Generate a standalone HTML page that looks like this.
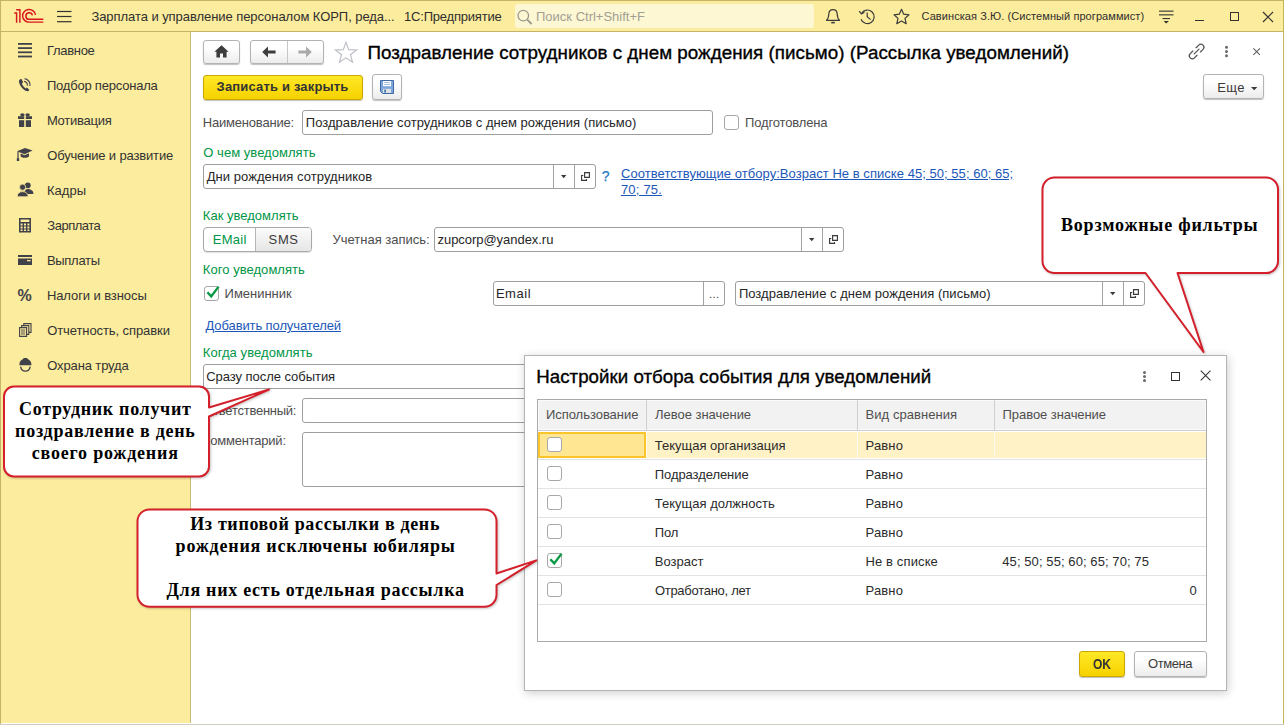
<!DOCTYPE html>
<html lang="ru">
<head>
<meta charset="utf-8">
<title>Рассылка уведомлений</title>
<style>
*{box-sizing:border-box}
html,body{margin:0;padding:0}
body{width:1284px;height:725px;position:relative;overflow:hidden;background:#fff;font-family:"Liberation Sans",sans-serif;font-size:13px;color:#333}
.abs{position:absolute}
.t{position:absolute;white-space:nowrap;line-height:16px;font-size:13px}
.g{color:#009646}
.lbl{color:#4d4d4d}
.blk{color:#262626}
.lnk{color:#1c57b9;text-decoration:underline}
.inp{position:absolute;border:1px solid #9e9e9e;border-radius:3px;background:#fff;height:25px}
.inp .v{position:absolute;left:4px;top:4px;line-height:16px;white-space:nowrap;color:#1a1a1a}
.dv{position:absolute;top:0;bottom:0;width:1px;background:#a2a2a2}
.ar{right:28.4px;top:10px}
.op{right:4.8px;top:7.2px}
.btn{position:absolute;border:1px solid #b3b3b3;border-radius:3px;background:linear-gradient(#ffffff 30%,#ececec);box-shadow:0 1px 1px rgba(0,0,0,.25)}
.ybtn{position:absolute;border:1px solid #c9a700;border-radius:3px;background:linear-gradient(#ffe826,#f6d200);box-shadow:0 1px 1px rgba(0,0,0,.25);font-weight:bold;color:#333;text-align:center}
.cb{position:absolute;width:15px;height:15px;border:1px solid #a8a8a8;border-radius:3px;background:#fff}
svg{position:absolute;overflow:visible}
.sf{font-family:"Liberation Serif",serif;font-weight:bold;color:#000;font-size:18px;line-height:22px}
</style>
</head>
<body>

<!-- ===== title bar ===== -->
<div class="abs" id="topbar" style="left:0;top:0;width:1284px;height:32px;background:#fcec9d;border-top:1px solid #c4b468;border-bottom:1px solid #c4b468"></div>
<!-- logo 1C -->
<svg style="left:0;top:0" width="60" height="32" viewBox="0 0 60 32" fill="none" stroke="#d9151d" stroke-width="1.45">
  <path d="M14.2 12.9 L16.6 12.9 L16.6 22.8"/>
  <path d="M16.2 9.8 L19.9 9.8 L19.9 22.8"/>
  <path d="M35.54 14.92 A6.5 6.3 0 1 0 29.1 22.1 L43.3 22.1"/>
  <path d="M32.4 15.3 A3.3 3.3 0 1 0 29.3 19.3 L43.3 19.3"/>
</svg>
<!-- hamburger -->
<svg style="left:57px;top:9px" width="15" height="14" viewBox="0 0 15 14" fill="#333">
  <rect x="0" y="1.9" width="14.5" height="1.2"/><rect x="0" y="6.9" width="14.5" height="1.2"/><rect x="0" y="12.1" width="14.5" height="1.2"/>
</svg>
<div class="t" style="left:91.4px;top:9px;color:#2f2f2f;letter-spacing:-0.06px">Зарплата и управление персоналом КОРП, реда...</div>
<div class="t" style="left:404px;top:9px;color:#2f2f2f;letter-spacing:-0.2px">1С:Предприятие</div>
<!-- search -->
<div class="abs" style="left:515px;top:4px;width:299px;height:24px;background:#fef7d3;border-radius:3px"></div>
<svg style="left:517px;top:9px" width="16" height="16" viewBox="0 0 16 16" fill="none" stroke="#9c9a8c" stroke-width="1.3">
  <circle cx="6.3" cy="6.6" r="5.3"/><path d="M10.2 10.6 L14.6 15" stroke-width="1.8"/>
</svg>
<div class="t" style="left:536px;top:9px;color:#a19f93">Поиск Ctrl+Shift+F</div>
<!-- bell -->
<svg style="left:825px;top:8px" width="16" height="17" viewBox="0 0 16 17" fill="none" stroke="#3c3c3c" stroke-width="1.2">
  <path d="M1.5 12.3 C3.6 10.6 3.7 8.6 3.8 6 C3.9 3.3 5.6 1.6 8 1.6 C10.4 1.6 12.1 3.3 12.2 6 C12.3 8.6 12.4 10.6 14.5 12.3 Z" stroke-linejoin="round"/>
  <path d="M6.2 14.6 L9.8 14.6" stroke-width="1.6"/>
</svg>
<!-- history -->
<svg style="left:858px;top:8px" width="18" height="17" viewBox="0 0 18 17" fill="none" stroke="#3c3c3c" stroke-width="1.2">
  <path d="M3.6 5.2 A6.8 6.8 0 1 1 3.0 11.2"/>
  <path d="M1.2 3.2 L3.4 5.9 L6.4 4.2" stroke-linejoin="round"/>
  <path d="M9.2 4.4 L9.2 8.8 L12.6 11.6"/>
</svg>
<!-- star -->
<svg style="left:893px;top:8px" width="17" height="17" viewBox="0 0 17 17" fill="none" stroke="#3c3c3c" stroke-width="1.2" stroke-linejoin="round">
  <path d="M8.5 1.3 L10.7 6.2 L16 6.8 L12 10.4 L13.2 15.7 L8.5 13 L3.8 15.7 L5 10.4 L1 6.8 L6.3 6.2 Z"/>
</svg>
<div class="t" style="left:921.5px;top:8px;font-size:11px;color:#2f2f2f;letter-spacing:0.077px">Савинская З.Ю. (Системный программист)</div>
<!-- settings lines -->
<svg style="left:1159px;top:10px" width="15" height="14" viewBox="0 0 15 14" fill="#333">
  <rect x="0" y="0.6" width="14.5" height="1.1"/><rect x="0" y="4.3" width="14.5" height="1.1"/><rect x="3.5" y="8" width="7.5" height="1.1"/>
  <path d="M4.6 11 L9.9 11 L7.25 13.6 Z"/>
</svg>
<!-- window buttons -->
<div class="abs" style="left:1195px;top:20px;width:9px;height:1.3px;background:#333"></div>
<div class="abs" style="left:1229.5px;top:11.5px;width:9.5px;height:9.5px;border:1.2px solid #333"></div>
<svg style="left:1262px;top:11px" width="12" height="12" viewBox="0 0 12 12" stroke="#333" stroke-width="1.2"><path d="M1 1 L11 11 M11 1 L1 11"/></svg>

<!-- ===== sidebar ===== -->
<div class="abs" id="side" style="left:0;top:32px;width:191px;height:691px;background:#fcec9d;border-right:1px solid #c9ba72"></div>
<div id="menu" style="color:#333">
<div class="t" style="left:46.9px;top:43px;letter-spacing:-0.292px">Главное</div>
<div class="t" style="left:46.9px;top:78px;letter-spacing:-0.203px">Подбор персонала</div>
<div class="t" style="left:46.9px;top:113px;letter-spacing:-0.244px">Мотивация</div>
<div class="t" style="left:47.2px;top:148px;letter-spacing:-0.153px">Обучение и развитие</div>
<div class="t" style="left:46.9px;top:183px;letter-spacing:0.075px">Кадры</div>
<div class="t" style="left:47.3px;top:218px;letter-spacing:-0.486px">Зарплата</div>
<div class="t" style="left:46.9px;top:253px;letter-spacing:-0.275px">Выплаты</div>
<div class="t" style="left:46.9px;top:288px;letter-spacing:-0.086px">Налоги и взносы</div>
<div class="t" style="left:47.2px;top:323px;letter-spacing:-0.089px">Отчетность, справки</div>
<div class="t" style="left:47.2px;top:358px;letter-spacing:-0.118px">Охрана труда</div>
</div>
<!-- sidebar icons -->
<svg style="left:18px;top:42.5px" width="14" height="15" viewBox="0 0 14 15" fill="#41414a">
  <rect x="0" y="0" width="14" height="1.8"/><rect x="0" y="4.2" width="14" height="1.8"/><rect x="0" y="8.4" width="14" height="1.8"/><rect x="0" y="12.6" width="14" height="1.8"/>
</svg>
<svg style="left:18px;top:78px" width="14" height="14" viewBox="0 0 14 14" fill="#41414a">
  <path d="M1.2 2.2 C1.8 1.2 2.8 0.9 3.5 1.1 L5.2 4.3 L3.9 5.6 C4.6 7.6 5.8 9.2 7.6 10.4 L9.0 9.5 L11.4 12.0 C10.8 13.0 9.8 13.4 8.6 13.1 C4.6 11.6 1.6 7.6 1.0 4.0 C0.9 3.3 0.9 2.7 1.2 2.2 Z"/>
  <path d="M6.2 3.3 A3.6 3.6 0 0 1 9.3 7.6" fill="none" stroke="#41414a" stroke-width="1.2"/>
  <path d="M6.6 0.7 A6.2 6.2 0 0 1 11.9 8.0" fill="none" stroke="#41414a" stroke-width="1.2"/>
</svg>
<svg style="left:18px;top:113px" width="14" height="14" viewBox="0 0 14 14" fill="#41414a">
  <rect x="0" y="3.2" width="6.2" height="2.8"/><rect x="7.8" y="3.2" width="6.2" height="2.8"/>
  <rect x="1" y="7.2" width="5.2" height="6.8"/><rect x="7.8" y="7.2" width="5.2" height="6.8"/>
  <ellipse cx="4.4" cy="1.8" rx="2.2" ry="1.5"/><ellipse cx="9.6" cy="1.8" rx="2.2" ry="1.5"/>
</svg>
<svg style="left:16px;top:147px" width="17" height="15" viewBox="0 0 17 15" fill="#41414a">
  <path d="M1 4.2 L9 1 L16.6 3.6 L8.6 7.2 Z"/>
  <path d="M4.6 6.4 L8.6 8.2 L13 6.2 L13 9.2 C11.5 11.2 6.4 11.2 4.6 9.4 Z"/>
  <rect x="1.4" y="4.6" width="1.2" height="7"/><rect x="0.8" y="11.2" width="2.4" height="2.8"/>
</svg>
<svg style="left:17px;top:182px" width="17" height="15" viewBox="0 0 17 15" fill="#41414a">
  <circle cx="10.8" cy="3.3" r="2.9"/>
  <path d="M7.5 11.2 C7.5 8.2 9 7 10.8 7 C13.5 7 16.4 8.6 16.4 11.4 L16.4 12 L7.5 12 Z"/>
  <circle cx="5.6" cy="5.2" r="3.1" stroke="#fcec9d" stroke-width="0.8"/>
  <path d="M0.2 14.8 C0.2 11.4 2.6 9.6 5.6 9.6 C8.6 9.6 11.2 11.4 11.2 14.8 Z" stroke="#fcec9d" stroke-width="0.8"/>
</svg>
<svg style="left:19px;top:218px" width="12" height="15" viewBox="0 0 12 15" fill="#41414a">
  <path d="M0 0 H12 V14.4 H0 Z M1.6 1.6 V4 H10.4 V1.6 Z M1.6 5.6 V7.4 H3.6 V5.6 Z M5 5.6 V7.4 H7 V5.6 Z M8.4 5.6 V7.4 H10.4 V5.6 Z M1.6 8.6 V10.4 H3.6 V8.6 Z M5 8.6 V10.4 H7 V8.6 Z M8.4 8.6 V10.4 H10.4 V8.6 Z M1.6 11.4 V13 H3.6 V11.4 Z M5 11.4 V13 H7 V11.4 Z M8.4 11.4 V13 H10.4 V11.4 Z" fill-rule="evenodd"/>
</svg>
<svg style="left:18px;top:255px" width="14" height="11" viewBox="0 0 14 11" fill="#41414a">
  <rect x="0" y="0" width="14" height="2"/>
  <path d="M0 3.6 H14 V10 H0 Z M9 5 V6.2 H12.6 V5 Z" fill-rule="evenodd"/>
</svg>
<div class="t" style="left:17.6px;top:287px;font-weight:bold;font-size:16px;color:#41414a;line-height:18px">%</div>
<svg style="left:19px;top:323px" width="13" height="14" viewBox="0 0 13 14" fill="none" stroke="#41414a" stroke-width="1.1">
  <path d="M0.6 4.6 H7.6 V13.4 H0.6 Z"/>
  <path d="M2.6 4.4 V2.6 H9.8 V11.4 H7.8"/>
  <path d="M4.8 2.4 V0.6 H12 V9.4 H10"/>
  <path d="M2 7 H6.2 M2 9 H6.2 M2 11 H6.2" stroke-width="0.9"/>
</svg>
<svg style="left:19px;top:358px" width="13" height="14" viewBox="0 0 13 14" fill="#41414a">
  <path d="M0.4 6.4 C0.4 3.6 2 1.6 4.4 0.9 L4.4 0 L8.4 0 L8.4 0.9 C10.8 1.6 12.4 3.6 12.4 6.4 L12.4 7.2 L0.4 7.2 Z"/>
  <path d="M1.6 8.6 C2 11.4 4 13.2 6.4 13.2 C8.8 13.2 10.8 11.4 11.2 8.6" fill="none" stroke="#41414a" stroke-width="1.3"/>
</svg>
<!-- ===== main form ===== -->
<div id="form">
<!-- nav buttons -->
<div class="btn" style="left:203px;top:40px;width:37px;height:24px"></div>
<svg style="left:214px;top:45px" width="15" height="13" viewBox="0 0 15 13" fill="#3d3d3d">
  <path d="M7.5 0.2 L14.6 6.8 L12.6 6.8 L12.6 12.6 L9.0 12.6 L9.0 8.4 L6.0 8.4 L6.0 12.6 L2.4 12.6 L2.4 6.8 L0.4 6.8 Z"/>
</svg>
<div class="btn" style="left:250px;top:40px;width:74px;height:24px"></div>
<div class="abs" style="left:287px;top:41px;width:1px;height:22px;background:#c6c6c6"></div>
<svg style="left:262px;top:46px" width="14" height="12" viewBox="0 0 14 12" fill="#3d3d3d">
  <path d="M6 0.4 L6 4.6 L13.6 4.6 L13.6 7.4 L6 7.4 L6 11.6 L0.2 6 Z"/>
</svg>
<svg style="left:298px;top:46px" width="14" height="12" viewBox="0 0 14 12" fill="#a9a9a9">
  <path d="M8 0.4 L8 4.6 L0.4 4.6 L0.4 7.4 L8 7.4 L8 11.6 L13.8 6 Z"/>
</svg>
<svg style="left:334.3px;top:41px" width="24" height="23" viewBox="0 0 24 23" fill="#fff" stroke="#b9bcc4" stroke-width="1.1" stroke-linejoin="miter">
  <path d="M12 1.4 L14.7 8.6 L22.6 8.9 L16.4 13.7 L18.6 21.3 L12 16.9 L5.4 21.3 L7.6 13.7 L1.4 8.9 L9.3 8.6 Z"/>
</svg>
<div class="t" id="ttl" style="left:367.5px;top:41px;font-size:18.8px;line-height:24px;color:#000;-webkit-text-stroke:0.35px #000;letter-spacing:0.030px">Поздравление сотрудников с днем рождения (письмо) (Рассылка уведомлений)</div>
<!-- link, dots, close -->
<svg style="left:1188px;top:43px" width="17" height="17" viewBox="0 0 17 17" fill="none" stroke="#555" stroke-width="1.3" stroke-linecap="round">
  <g transform="translate(8.6 8.5) rotate(-45)"><path d="M2.4 -3 h3.6 a3 3 0 0 1 0 6 h-3.6"/><path d="M-2.4 3 h-3.6 a3 3 0 0 1 0 -6 h3.6"/><path d="M-3.4 0 H3.4"/></g>
</svg>
<svg style="left:1224px;top:45px" width="5" height="13" viewBox="0 0 5 13" fill="#6a6a6a">
  <circle cx="2.5" cy="2.2" r="1.5"/><circle cx="2.5" cy="6.5" r="1.5"/><circle cx="2.5" cy="10.8" r="1.5"/>
</svg>
<svg style="left:1253px;top:48px" width="7.3" height="7.3" viewBox="0 0 8 8" stroke="#5c5c5c" stroke-width="1.1"><path d="M0.4 0.4 L7.6 7.6 M7.6 0.4 L0.4 7.6"/></svg>
<!-- command bar -->
<div class="ybtn" style="left:203px;top:75px;width:160px;height:25px"></div>
<div class="t" style="left:216.6px;top:79px;font-weight:bold;color:#333;letter-spacing:0.171px">Записать и закрыть</div>
<div class="btn" style="left:372px;top:74px;width:30px;height:26px"></div>
<svg style="left:380px;top:80px" width="14" height="14" viewBox="0 0 14 14">
  <path d="M0.5 0.5 H13.5 V13.5 H2.6 L0.5 11.4 Z" fill="#7ea7dd" stroke="#3f69a6"/>
  <rect x="3" y="1" width="8" height="5.2" fill="#fff"/>
  <rect x="4.2" y="2.2" width="5.6" height="0.8" fill="#8eb0de"/><rect x="4.2" y="4" width="5.6" height="0.8" fill="#8eb0de"/>
  <rect x="3" y="8.8" width="8" height="4.2" fill="#dde2e2"/>
  <rect x="4.2" y="9.6" width="1.8" height="3" fill="#4b78b8"/>
</svg>
<div class="btn" style="left:1203px;top:74px;width:61px;height:25px"></div>
<div class="t" style="left:1217.2px;top:80px;color:#3a3a3a;letter-spacing:0.45px">Еще</div>
<svg style="left:1250.6px;top:87px" width="6.4" height="3.6" viewBox="0 0 7 4" fill="#3a3a3a"><path d="M0 0 L7 0 L3.5 3.6 Z"/></svg>

<!-- row: name -->
<div class="t lbl" style="left:202.8px;top:115px;letter-spacing:-0.200px">Наименование:</div>
<div class="inp" style="left:302px;top:110px;width:411px"></div>
<div class="t blk" style="left:305.8px;top:115px;letter-spacing:0.031px">Поздравление сотрудников с днем рождения (письмо)</div>
<div class="cb" style="left:724px;top:115px"></div>
<div class="t lbl" style="left:745.0px;top:115px;letter-spacing:-0.145px">Подготовлена</div>

<!-- about -->
<div class="t g" style="left:203.3px;top:145px;letter-spacing:0.037px">О чем уведомлять</div>
<div class="inp" style="left:203px;top:164px;width:393px"><i class="dv" style="right:41px"></i><i class="dv" style="right:20px"></i><svg class="ar" width="5.4" height="3.2" viewBox="0 0 5.4 3.2" fill="#3a3a3a"><path d="M0 0 L5.4 0 L2.7 3.2 Z"/></svg><svg class="op" width="9" height="9" viewBox="0 0 9 9" fill="none" stroke="#3a3a3a" stroke-width="1.15"><path d="M3.6 0.6 H8.4 V5.4 H3.6 Z"/><path d="M2.3 3.5 H0.6 V8.4 H5.5 V6.9"/></svg></div>
<div class="t blk" style="left:206.7px;top:169px;letter-spacing:0.048px">Дни рождения сотрудников</div>
<div class="t" style="left:601.8px;top:168.2px;color:#217bc4;font-size:14px;-webkit-text-stroke:0.25px #217bc4">?</div>
<div class="t lnk" style="left:621.1px;top:166px;letter-spacing:0.042px">Соответствующие отбору:Возраст Не в списке 45; 50; 55; 60; 65;</div>
<div class="t lnk" style="left:620.9px;top:182px;letter-spacing:0.208px">70; 75.</div>

<!-- how -->
<div class="t g" style="left:202.8px;top:208px;letter-spacing:0.019px">Как уведомлять</div>
<div class="abs" style="left:203px;top:227px;width:109px;height:25px;border:1px solid #a9a9a9;border-radius:4px;background:#fff;box-shadow:0 1px 1px rgba(0,0,0,.12)"></div>
<div class="abs" style="left:255px;top:228px;width:56px;height:23px;border-left:1px solid #b5b5b5;border-radius:0 3px 3px 0;background:linear-gradient(#fbfbfb,#e6e6e6)"></div>
<div class="t g" style="left:212.7px;top:232px;letter-spacing:0.300px">EMail</div>
<div class="t" style="left:268.6px;top:232px;color:#3a3a3a;letter-spacing:0.625px">SMS</div>
<div class="t lbl" style="left:332.6px;top:232px;letter-spacing:-0.021px">Учетная запись:</div>
<div class="inp" style="left:434px;top:227px;width:410px"><i class="dv" style="right:41px"></i><i class="dv" style="right:20px"></i><svg class="ar" width="5.4" height="3.2" viewBox="0 0 5.4 3.2" fill="#3a3a3a"><path d="M0 0 L5.4 0 L2.7 3.2 Z"/></svg><svg class="op" width="9" height="9" viewBox="0 0 9 9" fill="none" stroke="#3a3a3a" stroke-width="1.15"><path d="M3.6 0.6 H8.4 V5.4 H3.6 Z"/><path d="M2.3 3.5 H0.6 V8.4 H5.5 V6.9"/></svg></div>
<div class="t blk" style="left:437.5px;top:232px;letter-spacing:-0.041px">zupcorp@yandex.ru</div>

<!-- who -->
<div class="t g" style="left:202.8px;top:262px;letter-spacing:0.046px">Кого уведомлять</div>
<div class="cb" style="left:204px;top:286px"></div>
<svg style="left:206px;top:285px" width="14" height="14" viewBox="0 0 14 14" fill="none" stroke="#0a9a46" stroke-width="2.4"><path d="M1.4 7.2 L5.2 11.4 L12.6 1.6"/></svg>
<div class="t lbl" style="left:224.6px;top:286px;letter-spacing:-0.019px">Именинник</div>
<div class="inp" style="left:493px;top:281px;width:232px"><i class="dv" style="right:20px"></i></div>
<div class="t blk" style="left:495.9px;top:286px;letter-spacing:0.562px">Email</div>
<div class="t blk" style="left:709px;top:286px;font-size:11px;letter-spacing:0.45px;color:#333">...</div>
<div class="inp" style="left:735px;top:281px;width:410px"><i class="dv" style="right:41px"></i><i class="dv" style="right:20px"></i><svg class="ar" width="5.4" height="3.2" viewBox="0 0 5.4 3.2" fill="#3a3a3a"><path d="M0 0 L5.4 0 L2.7 3.2 Z"/></svg><svg class="op" width="9" height="9" viewBox="0 0 9 9" fill="none" stroke="#3a3a3a" stroke-width="1.15"><path d="M3.6 0.6 H8.4 V5.4 H3.6 Z"/><path d="M2.3 3.5 H0.6 V8.4 H5.5 V6.9"/></svg></div>
<div class="t blk" style="left:738.9px;top:286px;letter-spacing:0.022px">Поздравление с днем рождения (письмо)</div>
<div class="t lnk" style="left:205.5px;top:318px;letter-spacing:-0.105px">Добавить получателей</div>

<!-- when -->
<div class="t g" style="left:202.8px;top:345px;letter-spacing:0.067px">Когда уведомлять</div>
<div class="inp" style="left:203px;top:364px;width:393px"></div>
<div class="t blk" style="left:206.2px;top:369px;letter-spacing:-0.044px">Сразу после события</div>
<div class="t lbl" style="left:203.3px;top:403px;letter-spacing:-0.254px">Ответственный:</div>
<div class="inp" style="left:302px;top:398px;width:411px"></div>

<div class="t lbl" style="left:202.8px;top:433px;letter-spacing:-0.209px">Комментарий:</div>
<div class="inp" style="left:302px;top:432px;width:411px;height:55px"></div>

</div>
<!-- ===== callout 1 (drawn under dialog) ===== -->
<svg id="c1" style="left:0;top:0;filter:drop-shadow(1px 1px 1px rgba(0,0,0,.22))" width="1284" height="725" viewBox="0 0 1284 725">
  <path d="M14 386.500 H199 A10 10 0 0 1 209 396.500 V407.500 L269 389.500 L209 416.500 V466.500 A10 10 0 0 1 199 476.500 H14 A10 10 0 0 1 4 466.500 V396.500 A10 10 0 0 1 14 386.500 Z" fill="#fff" stroke="#d3202b" stroke-width="2" stroke-linejoin="round"/>
</svg>
<div class="t sf" style="left:19.0px;top:397.9px;letter-spacing:0.691px">Сотрудник получит</div>
<div class="t sf" style="left:15.1px;top:419.9px;letter-spacing:0.742px">поздравление в день</div>
<div class="t sf" style="left:31.8px;top:441.7px;letter-spacing:0.793px">своего рождения</div>

<!-- ===== dialog ===== -->
<div class="abs" id="dlg" style="left:524px;top:355px;width:703px;height:336px;background:#fff;border:1px solid #b4b4b4;box-shadow:1px 2px 9px rgba(0,0,0,.2)"></div>
<div class="t" style="left:536.2px;top:365px;font-size:18.7px;line-height:24px;color:#000;-webkit-text-stroke:0.35px #000;letter-spacing:0.037px">Настройки отбора события для уведомлений</div>
<svg style="left:1142px;top:371px" width="5" height="11" viewBox="0 0 5 11" fill="#6a6a6a">
  <circle cx="2.5" cy="1.6" r="1.5"/><circle cx="2.5" cy="5.5" r="1.5"/><circle cx="2.5" cy="9.4" r="1.5"/>
</svg>
<div class="abs" style="left:1171px;top:372px;width:9.4px;height:9.4px;border:1.2px solid #333"></div>
<svg style="left:1200.4px;top:370.4px" width="11.2" height="11.2" viewBox="0 0 12 12" stroke="#333" stroke-width="1.15"><path d="M0.8 0.8 L11.2 11.2 M11.2 0.8 L0.8 11.2"/></svg>
<!-- table -->
<div class="abs" id="tbl" style="left:537px;top:399px;width:670px;height:243px;border:1px solid #a9a9a9;background:#fff"></div>
<div class="abs" style="left:538px;top:400px;width:668px;height:31px;background:#f2f2f2;border-bottom:1px solid #cfcfcf;box-shadow:inset 0 0 0 1px #fafafa"></div>
<div class="abs" style="left:646px;top:400px;width:1px;height:30px;background:#d0d0d0"></div>
<div class="abs" style="left:857px;top:400px;width:1px;height:30px;background:#d0d0d0"></div>
<div class="abs" style="left:994px;top:400px;width:1px;height:30px;background:#d0d0d0"></div>
<div class="t" style="left:545.9px;top:407px;color:#4f4f4f;letter-spacing:-0.029px">Использование</div>
<div class="t" style="left:655.0px;top:407px;color:#4f4f4f;letter-spacing:-0.019px">Левое значение</div>
<div class="t" style="left:865.5px;top:407px;color:#4f4f4f;letter-spacing:0.063px">Вид сравнения</div>
<div class="t" style="left:1002.6px;top:407px;color:#4f4f4f;letter-spacing:-0.068px">Правое значение</div>
<!-- selected row -->
<div class="abs" style="left:538px;top:432px;width:668px;height:26px;background:#fff2c6"></div>
<div class="abs" style="left:538px;top:432px;width:108px;height:26px;background:#ffe692;border:2px solid #f9c52b"></div>
<div class="abs" style="left:646px;top:432px;width:1px;height:26px;background:#fffaf0"></div>
<div class="abs" style="left:857px;top:432px;width:1px;height:26px;background:#fffaf0"></div>
<div class="abs" style="left:994px;top:432px;width:1px;height:26px;background:#fffaf0"></div>
<!-- row lines -->
<div class="abs" style="left:538px;top:459px;width:668px;height:1px;background:#e3e3e3"></div>
<div class="abs" style="left:538px;top:488px;width:668px;height:1px;background:#e3e3e3"></div>
<div class="abs" style="left:538px;top:517px;width:668px;height:1px;background:#e3e3e3"></div>
<div class="abs" style="left:538px;top:546px;width:668px;height:1px;background:#e3e3e3"></div>
<div class="abs" style="left:538px;top:575px;width:668px;height:1px;background:#e3e3e3"></div>
<div class="abs" style="left:538px;top:604px;width:668px;height:1px;background:#e3e3e3"></div>
<!-- checkboxes -->
<div class="cb" style="left:547px;top:437px"></div>
<div class="cb" style="left:547px;top:466px"></div>
<div class="cb" style="left:547px;top:495px"></div>
<div class="cb" style="left:547px;top:524px"></div>
<div class="cb" style="left:547px;top:553px"></div>
<svg style="left:549px;top:552px" width="14" height="14" viewBox="0 0 14 14" fill="none" stroke="#0a9a46" stroke-width="2.4"><path d="M1.4 7.2 L5.2 11.4 L12.6 1.6"/></svg>
<div class="cb" style="left:547px;top:582px"></div>
<!-- cells -->
<div id="cells" style="color:#2b2b2b">
<div class="t" style="left:654.8px;top:438px;letter-spacing:-0.006px">Текущая организация</div><div class="t" style="left:865.5px;top:438px;letter-spacing:0.150px">Равно</div>
<div class="t" style="left:654.8px;top:467px;letter-spacing:-0.075px">Подразделение</div><div class="t" style="left:865.5px;top:467px;letter-spacing:0.150px">Равно</div>
<div class="t" style="left:654.8px;top:496px;letter-spacing:0.009px">Текущая должность</div><div class="t" style="left:865.5px;top:496px;letter-spacing:0.150px">Равно</div>
<div class="t" style="left:654.8px;top:525px;letter-spacing:-0.125px">Пол</div><div class="t" style="left:865.5px;top:525px;letter-spacing:0.150px">Равно</div>
<div class="t" style="left:654.8px;top:554px;letter-spacing:0.008px">Возраст</div><div class="t" style="left:865.5px;top:554px;letter-spacing:0.120px">Не в списке</div><div class="t" style="left:1002.3px;top:554px;letter-spacing:0.082px">45; 50; 55; 60; 65; 70; 75</div>
<div class="t" style="left:654.9px;top:583px;letter-spacing:-0.271px">Отработано, лет</div><div class="t" style="left:865.5px;top:583px;letter-spacing:0.150px">Равно</div><div class="t" style="left:1189.5px;top:583px;letter-spacing:0.000px">0</div>
</div>
<!-- dialog buttons -->
<div class="ybtn" style="left:1079px;top:651px;width:46px;height:26px"></div>
<div class="t" style="left:1093.2px;top:656px;font-weight:bold;color:#333;font-size:14px;transform:scaleX(0.86);transform-origin:0 0">OK</div>
<div class="btn" style="left:1134px;top:651px;width:73px;height:26px"></div>
<div class="t" style="left:1148px;top:656px;color:#3a3a3a;letter-spacing:-0.45px">Отмена</div>

<!-- ===== callout 2 ===== -->
<svg id="c2" style="left:0;top:0;filter:drop-shadow(1px 1px 1px rgba(0,0,0,.22))" width="1284" height="725" viewBox="0 0 1284 725">
  <path d="M149.500 509.400 H484.500 A12 12 0 0 1 496.500 521.400 V573.500 L536.300 560.400 L496.500 585 V594.800 A12 12 0 0 1 484.500 606.800 H149.500 A12 12 0 0 1 137.500 594.800 V521.400 A12 12 0 0 1 149.500 509.400 Z" fill="#fff" stroke="#d3202b" stroke-width="2" stroke-linejoin="round"/>
</svg>
<div class="t sf" style="left:190.2px;top:513.2px;letter-spacing:0.652px">Из типовой рассылки в день</div>
<div class="t sf" style="left:175.6px;top:535.2px;letter-spacing:0.786px">рождения исключены юбиляры</div>
<div class="t sf" style="left:166.5px;top:579.3px;letter-spacing:0.717px">Для них есть отдельная рассылка</div>

<!-- ===== callout 3 ===== -->
<svg id="c3" style="left:0;top:0;filter:drop-shadow(1px 1px 1px rgba(0,0,0,.22))" width="1284" height="725" viewBox="0 0 1284 725">
  <path d="M1054.500 177.500 H1266 A12 12 0 0 1 1278 189.500 V261 A12 12 0 0 1 1266 273 H1177.500 L1203.500 352 L1145.500 273 H1054.500 A12 12 0 0 1 1042.500 261 V189.500 A12 12 0 0 1 1054.500 177.500 Z" fill="#fff" stroke="#d3202b" stroke-width="2" stroke-linejoin="round"/>
</svg>
<div class="t sf" style="left:1061.0px;top:214.1px;letter-spacing:0.765px">Ворзможные фильтры</div>

<!-- window borders -->
<div class="abs" style="left:0;top:0;width:1px;height:725px;background:#c4b468"></div>
<div class="abs" style="left:1282.6px;top:0;width:1.4px;height:725px;background:#c6b25a"></div>
<div class="abs" style="left:0;top:723.6px;width:1284px;height:1.4px;background:#cfccc4"></div>

</body>
</html>
